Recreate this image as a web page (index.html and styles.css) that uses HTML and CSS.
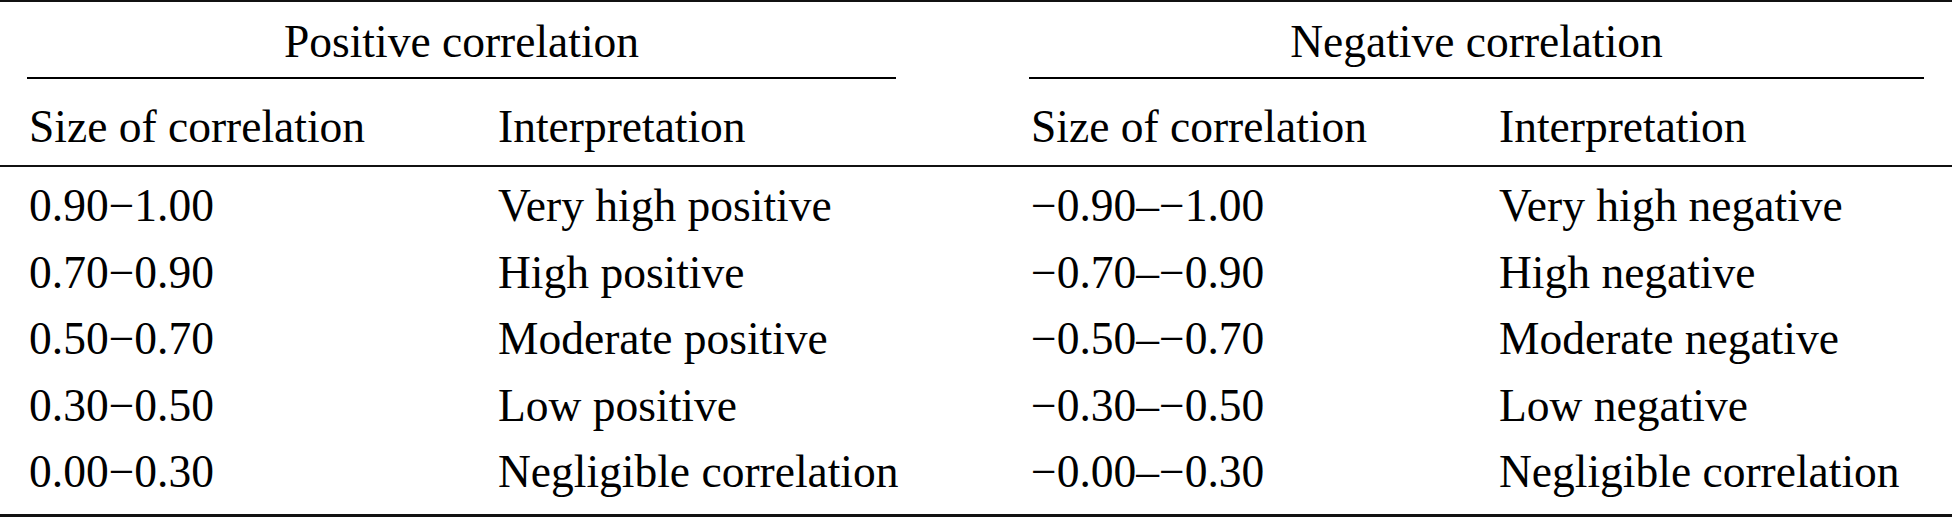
FILE: index.html
```html
<!DOCTYPE html>
<html lang="en">
<head>
<meta charset="utf-8">
<title>Correlation interpretation</title>
<link rel="stylesheet" href="styles.css">
</head>
<body>
<table class="corr">
  <colgroup>
    <col class="w1"><col class="w2"><col class="w3"><col class="w4">
  </colgroup>
  <thead>
    <tr class="group">
      <th colspan="2"><div class="group-label pos">Positive correlation</div></th>
      <th colspan="2"><div class="group-label neg">Negative correlation</div></th>
    </tr>
    <tr class="labels">
      <th class="c1">Size of correlation</th>
      <th class="c2">Interpretation</th>
      <th class="c3">Size of correlation</th>
      <th class="c4">Interpretation</th>
    </tr>
  </thead>
  <tbody>
    <tr>
      <td class="c1">0.90&minus;1.00</td>
      <td class="c2">Very high positive</td>
      <td class="c3">&minus;0.90&ndash;&minus;1.00</td>
      <td class="c4">Very high negative</td>
    </tr>
    <tr>
      <td class="c1">0.70&minus;0.90</td>
      <td class="c2">High positive</td>
      <td class="c3">&minus;0.70&ndash;&minus;0.90</td>
      <td class="c4">High negative</td>
    </tr>
    <tr>
      <td class="c1">0.50&minus;0.70</td>
      <td class="c2">Moderate positive</td>
      <td class="c3">&minus;0.50&ndash;&minus;0.70</td>
      <td class="c4">Moderate negative</td>
    </tr>
    <tr>
      <td class="c1">0.30&minus;0.50</td>
      <td class="c2">Low positive</td>
      <td class="c3">&minus;0.30&ndash;&minus;0.50</td>
      <td class="c4">Low negative</td>
    </tr>
    <tr>
      <td class="c1">0.00&minus;0.30</td>
      <td class="c2">Negligible correlation</td>
      <td class="c3">&minus;0.00&ndash;&minus;0.30</td>
      <td class="c4">Negligible correlation</td>
    </tr>
  </tbody>
</table>
</body>
</html>
```
FILE: styles.css
```css
html, body {
  margin: 0;
  padding: 0;
  background: #ffffff;
}

.corr {
  border-collapse: separate;
  border-spacing: 0;
  table-layout: fixed;
  width: 1952px;
  font-family: "Liberation Serif", "Times New Roman", serif;
  font-size: 45.5px;
  color: #000000;
  border-top: 2px solid #111111;
  border-bottom: 3px solid #111111;
}

.w1 { width: 498px; }
.w2 { width: 464px; }
.w3 { width: 537px; }
.w4 { width: 453px; }

.corr th,
.corr td {
  padding: 0;
  text-align: left;
  font-weight: normal;
  white-space: nowrap;
  vertical-align: top;
}

.group-label {
  text-align: center;
  line-height: 52px;
  padding: 14px 0 9px;
  border-bottom: 2px solid #000000;
}

.group-label.pos {
  margin: 0 66px 0 27px;
}

.group-label.neg {
  margin: 0 28px 0 67px;
}

.labels th {
  line-height: 66px;
  padding-top: 15px;
  padding-bottom: 5px;
  border-bottom: 2px solid #111111;
}

.corr td {
  line-height: 66.5px;
}

.corr tbody tr:first-child td {
  padding-top: 6px;
}

.corr tbody tr:last-child td {
  padding-bottom: 8px;
}

.corr .c1 { padding-left: 29px; }
.corr .c3 { padding-left: 69px; }
```
